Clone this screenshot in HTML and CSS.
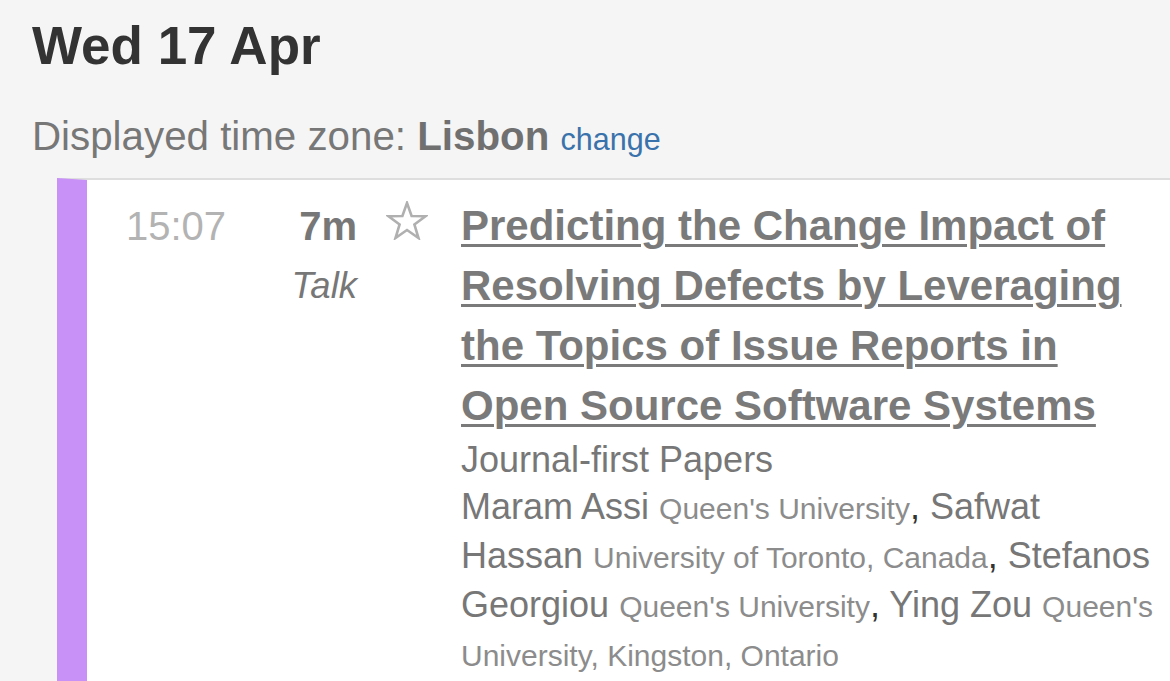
FILE: index.html
```html
<!DOCTYPE html>
<html lang="en">
<head>
<meta charset="utf-8">
<title>Wed 17 Apr</title>
<link rel="stylesheet" href="styles.css">
</head>
<body>
<h2 class="day">Wed 17 Apr</h2>
<div class="tz">Displayed time zone: <strong>Lisbon</strong> <a class="tz-change" href="#">change</a></div>
<div class="session">
  <div class="slot">
    <div class="time">15:07</div>
    <div class="dur">
      <div class="dur-len">7m</div>
      <div class="dur-type">Talk</div>
    </div>
    <div class="star">
      <svg width="42" height="39" viewBox="0 0 42 39" aria-hidden="true">
        <polygon points="21,2 25.6,15 39.5,15.2 28.4,23.5 32.5,37 21,29 9.5,37 13.6,23.5 2.5,15.2 16.4,15" fill="none" stroke="#b0b0b0" stroke-width="2.6" stroke-linejoin="miter"/>
      </svg>
    </div>
    <div class="info">
      <a class="title" href="#">Predicting the Change Impact of Resolving Defects by Leveraging the Topics of Issue Reports in Open Source Software Systems</a>
      <div class="track">Journal-first Papers</div>
      <div class="authors"><span class="name">Maram Assi</span> <span class="aff">Queen's University</span><span class="sep">,</span> <span class="name">Safwat Hassan</span> <span class="aff">University of Toronto, Canada</span><span class="sep">,</span> <span class="name">Stefanos Georgiou</span> <span class="aff">Queen's University</span><span class="sep">,</span> <span class="name">Ying Zou</span> <span class="aff">Queen's University, Kingston, Ontario</span></div>
    </div>
  </div>
</div>
</body>
</html>
```

FILE: styles.css
```css
html, body {
  margin: 0;
  padding: 0;
}
body {
  background: #f5f5f5;
  font-family: "Liberation Sans", Arial, Helvetica, sans-serif;
  padding-left: 32px;
  overflow: hidden;
  height: 681px;
}
.day {
  margin: 16px 0 0 0;
  font-size: 53px;
  line-height: 59px;
  font-weight: bold;
  color: #333333;
}
.tz {
  margin-top: 38px;
  font-size: 40.3px;
  line-height: 47px;
  color: #777777;
}
.tz strong {
  font-weight: bold;
  color: #707070;
}
.tz-change {
  font-size: 30.5px;
  color: #3a72ab;
  text-decoration: none;
}
.session {
  margin: 15px 0 0 25px;
  background: #ffffff;
  border-top: 2px solid #dedede;
  border-left: 30px solid #c791f7;
  min-height: 600px;
}
.slot {
  display: grid;
  grid-template-columns: 99px 132px 104px 1fr;
  padding: 16px 5px 0 39px;
}
.time {
  font-size: 40px;
  line-height: 60px;
  color: #b3b3b3;
}
.dur {
  text-align: right;
  color: #777777;
}
.dur-len {
  font-size: 40px;
  line-height: 60px;
  font-weight: bold;
}
.dur-type {
  font-size: 36.5px;
  line-height: 60px;
  font-style: italic;
}
.star {
  padding-left: 29px;
  padding-top: 5px;
}
.star svg {
  display: block;
}
.info {
  color: #777777;
}
.title {
  display: block;
  font-size: 42px;
  line-height: 60px;
  font-weight: bold;
  color: #7a7a7a;
  text-decoration: underline;
  text-decoration-thickness: 3px;
  text-underline-offset: 4px;
}
.track {
  font-size: 36px;
  line-height: 47px;
  color: #777777;
}
.authors {
  font-size: 36px;
  line-height: 47px;
  color: #777777;
}
.aff {
  font-size: 30px;
  color: #8c8c8c;
}
.sep {
  color: #333333;
}
```
